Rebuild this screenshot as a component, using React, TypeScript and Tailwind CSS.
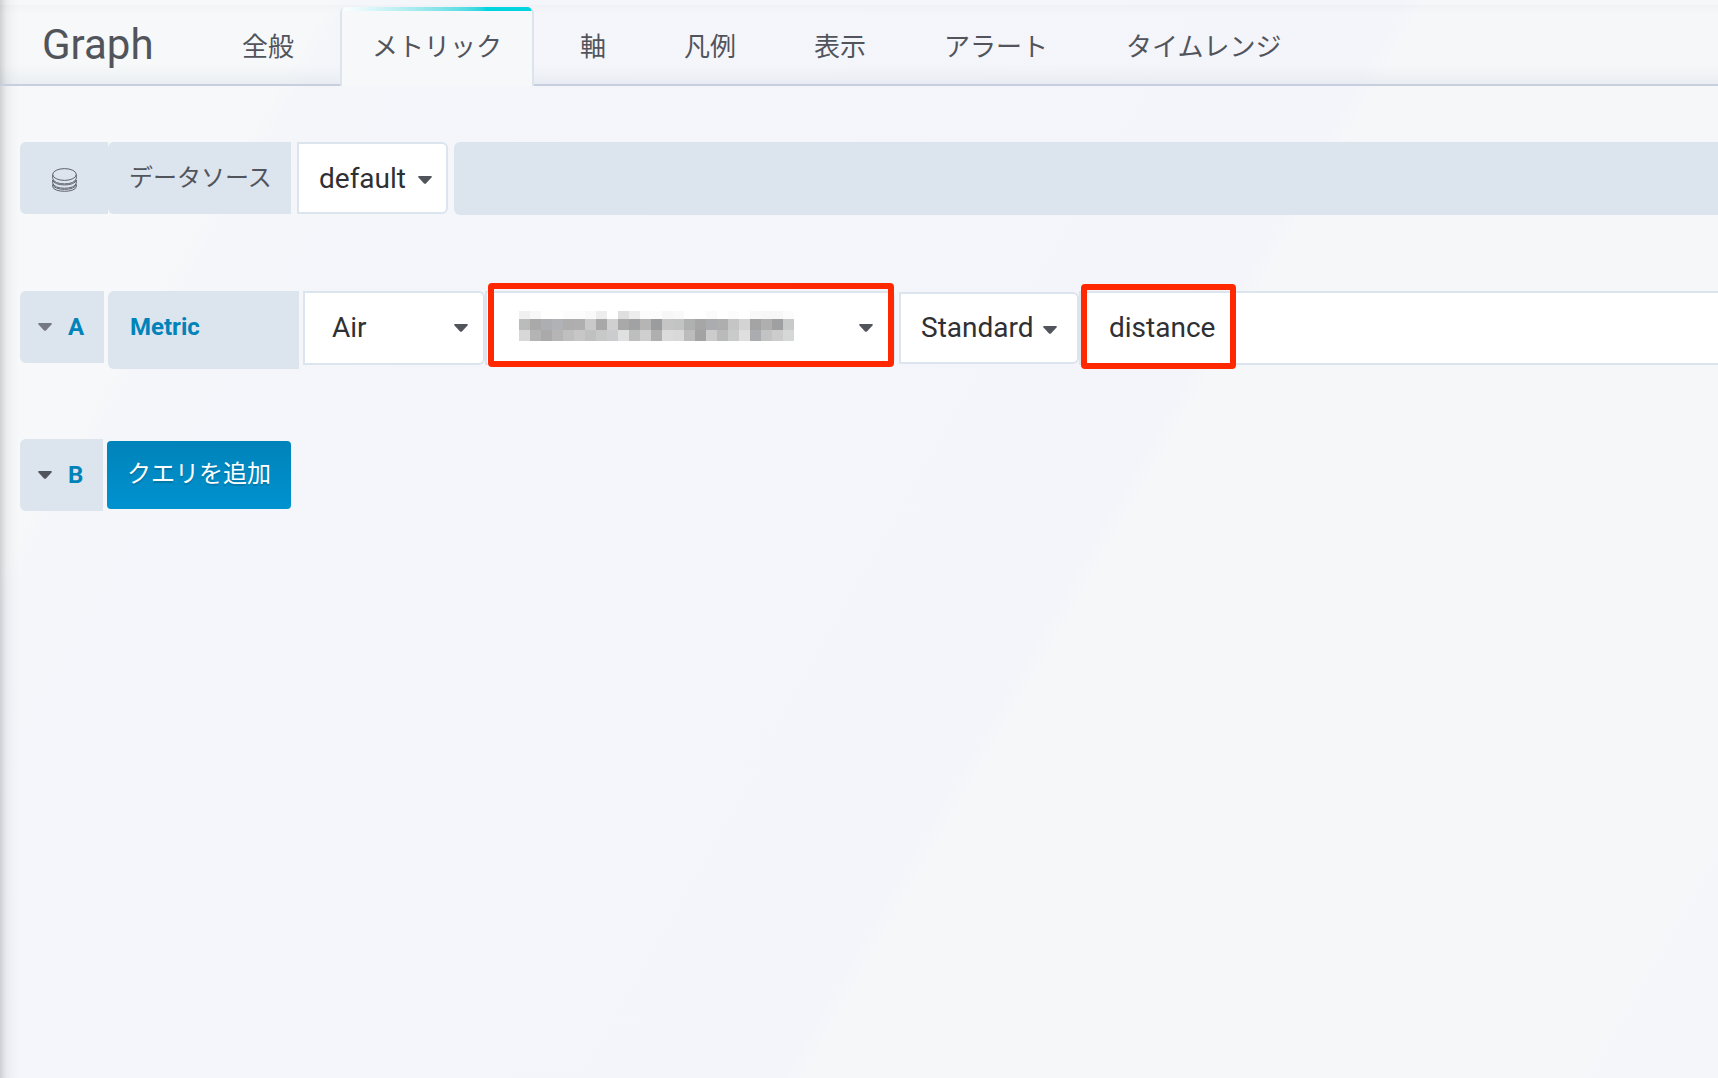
import type { ReactNode } from "react";

const TABS = ["全般", "メトリック", "軸", "凡例", "表示", "アラート", "タイムレンジ"];
const ACTIVE_TAB = "メトリック";

function Caret({ className = "" }: { className?: string }) {
  return (
    <svg viewBox="0 0 14 8" aria-hidden="true" className={`h-2 w-3.5 ${className}`}>
      <path d="M1 0h12q1.4 .5 .5 1.6L8.2 7.3Q7 8.4 5.8 7.3L.5 1.6Q-.4 .5 1 0z" fill="currentColor" />
    </svg>
  );
}

function DatabaseIcon() {
  return (
    <svg viewBox="0 0 25 24" aria-hidden="true" className="mt-1 h-6 w-[25px]" fill="none" stroke="#5f626b" strokeWidth="1">
      <ellipse cx="12.5" cy="6.5" rx="11.8" ry="5.9" />
      <path d="M.7 6.500v4c1 7.200 22.600 7.200 23.600 0v-4" />
      <path d="M.7 12v3c1 7 22.600 7 23.600 0v-3M.7 12c1 6.600 22.600 6.600 23.600 0" />
      <path d="M.7 16.500v2.300c1 6 22.600 6 23.600 0v-2.300c-1 6.500-22.600 6.500-23.600 0" />
    </svg>
  );
}

type PickerProps = { label: string; value: string; className: string; textClass: string; caretClass: string; children?: ReactNode };

function Picker({ label, value, className, textClass, caretClass, children }: PickerProps) {
  return (
    <div className={`relative shrink-0 ${className}`}>
      <select
        aria-label={label}
        className={`h-full w-full appearance-none rounded-r-md border-2 border-[#dce4ee] bg-white text-[28px] text-[#2f3033] outline-none ${textClass}`}
      >
        <option>{value}</option>
      </select>
      {children}
      <Caret className={`pointer-events-none absolute -translate-y-1/2 text-[#52545c] ${caretClass}`} />
    </div>
  );
}

const MOSAIC = [
  ["f0f0f0", "f8f8f8", "fff", "fff", "fcfcfc", "fcfcfc", "f9f9f9", "ededed", "fff", "dfdfdf", "ededed", "fcfcfc", "fcfcfc", "f7f7f7", "f9f9f9", "fff", "fff", "fbfbfb", "fff", "fcfcfc", "fff", "f9f9f9", "f7f7f7", "f7f7f7", "fcfcfc"],
  ["b9bcbb", "a9a9a9", "adaeb1", "b1b2b5", "aeaeae", "afafaf", "c9c9c9", "a8a8a8", "d0d0d0", "a9a9a9", "a1a2a4", "b5b5b5", "9b9c9e", "c5c5c5", "c1c4c3", "aeb1b0", "a6a6a6", "abacaf", "aeaeae", "c5c5c5", "d4d4d4", "a4a4a4", "afafaf", "9fa0a2", "c8caca"],
  ["d8d8d8", "b4b4b4", "aaaaaa", "b5b5b5", "bfbfbf", "c7c7c7", "bec1c0", "c7c9c9", "caccce", "dfe1e1", "bebebe", "cfcfcf", "afafaf", "dbdbdb", "d9d9d9", "bcbcbc", "a3a3a3", "cccccc", "bababa", "c9cbcb", "dfdfdf", "abacaf", "c3c3c3", "cccccc", "d5d8d7"],
];
const MOSAIC_ROWS = [
  { y: 0, height: 8 },
  { y: 8, height: 11 },
  { y: 19, height: 11 },
];

function Mosaic() {
  return (
    <svg viewBox="0 0 275 30" shapeRendering="crispEdges" aria-hidden="true" className="pointer-events-none absolute left-[34px] top-5 h-[30px] w-[275px]">
      {MOSAIC.map((row, r) =>
        row.map((color, c) => (
          <rect key={`${r}-${c}`} x={c * 11} y={MOSAIC_ROWS[r].y} width="11" height={MOSAIC_ROWS[r].height} fill={`#${color}`} />
        )),
      )}
    </svg>
  );
}

function QueryToggle({ letter, className }: { letter: string; className: string }) {
  return (
    <button type="button" className={`flex h-[72px] shrink-0 items-center rounded-l-md bg-[#dce4ee] pl-[18px] ${className}`}>
      <Caret />
      <span className="ml-4 text-2xl font-bold text-[#0083b9]">{letter}</span>
    </button>
  );
}

export default function App() {
  return (
    <div className="min-h-screen overflow-hidden bg-[linear-gradient(to_right,rgba(30,32,40,0.18),rgba(30,32,40,0.06)_6px,rgba(30,32,40,0.02)_12px,transparent_19px),linear-gradient(120deg,#f6f8f9_14%,#f4f6fa_15%,#f4f5fa_60%,#f6f7f9_61%,#f6f7f9_94%,#f5f6fa_95%)] font-[Roboto,'Noto_Sans_CJK_JP',sans-serif] text-[#52545c]">
      <header className="flex h-[86px] items-end border-b-2 border-[#c5cfdd] bg-[linear-gradient(to_bottom,transparent_5px,rgba(30,40,60,0.02)_5px,transparent_14px,transparent_64px,rgba(50,80,120,0.02)_72px,rgba(50,80,120,0.06))]">
        <h1 className="w-[210px] shrink-0 self-center pl-[42px] pt-1.5 text-[42px] leading-none">Graph</h1>
        <nav className="-mb-0.5 flex h-[79px] gap-3.5">
          {TABS.map((tab) =>
            tab === ACTIVE_TAB ? (
              <button
                key={tab}
                type="button"
                aria-current="page"
                className="relative overflow-hidden whitespace-nowrap rounded-t-md border-x-2 border-[#dce4ee] bg-[#f7f8fa] px-[30px] pt-0.5 text-[26px]"
              >
                <span className="absolute -inset-x-0.5 top-0 h-1 bg-linear-to-r from-white to-[#00d5df] to-75%" />
                {tab}
              </button>
            ) : (
              <button key={tab} type="button" className="whitespace-nowrap px-8 pt-0.5 text-[26px]">
                {tab}
              </button>
            ),
          )}
        </nav>
      </header>

      <main className="pl-5 pt-14">
        <section className="flex items-start">
          <div className="flex h-[72px] w-[88px] shrink-0 items-center justify-center rounded-l-md bg-[#dce4ee]">
            <DatabaseIcon />
          </div>
          <div className="flex h-[72px] w-[183px] shrink-0 items-center rounded-l-md bg-[#dce4ee] pl-[21px] text-2xl">データソース</div>
          <Picker label="データソース" value="default" className="ml-1.5 h-[72px] w-[151px]" textClass="pl-5 pt-0.5" caretClass="right-4 top-[38px]" />
          <div className="ml-1.5 h-[73px] flex-1 rounded-l-md bg-[#dce4ee]" />
        </section>

        <section className="mt-[76px] flex items-start">
          <QueryToggle letter="A" className="w-[84px] text-[#777982]" />
          <label htmlFor="field" className="ml-1 h-[78px] w-[191px] shrink-0 rounded-l-md bg-[#dce4ee] pl-[22px] text-2xl/[72px] font-bold text-[#0083b9]">
            Metric
          </label>
          <Picker label="Group" value="Air" className="ml-1 h-[74px] w-[182px]" textClass="pl-[27px]" caretClass="right-[17px] top-1/2" />
          <div className="relative shrink-0">
            <Picker label="Host" value="" className="h-[74px] w-[410px]" textClass="" caretClass="right-[22px] top-1/2">
              <Mosaic />
            </Picker>
            <div className="pointer-events-none absolute -bottom-0.5 -top-2 left-[3px] right-px rounded-sm border-6 border-[#ff2800]" />
          </div>
          <Picker label="Type" value="Standard" className="ml-1 mt-px h-[72px] w-[180px]" textClass="pl-5" caretClass="right-[22px] top-[38px]" />
          <div className="relative min-w-0 flex-1">
            <input
              id="field"
              type="text"
              defaultValue="distance"
              className="h-[74px] w-full border-y-2 border-l-2 border-[#dce4ee] bg-white pb-0.5 pl-7 text-[28px] text-[#2f3033] outline-none"
            />
            <div className="pointer-events-none absolute -top-[7px] left-[2px] h-[85px] w-[155px] rounded-sm border-6 border-[#ff2800]" />
          </div>
        </section>

        <section className="mt-[70px] flex items-center">
          <QueryToggle letter="B" className="w-[83px]" />
          <button
            type="button"
            className="ml-1 h-[68px] w-[184px] rounded-sm bg-linear-to-b from-[#0083b9] to-[#0092d0] pb-0.5 text-2xl text-white [text-shadow:0_2px_1px_rgba(0,0,0,0.15)]"
          >
            クエリを追加
          </button>
        </section>
      </main>
    </div>
  );
}
